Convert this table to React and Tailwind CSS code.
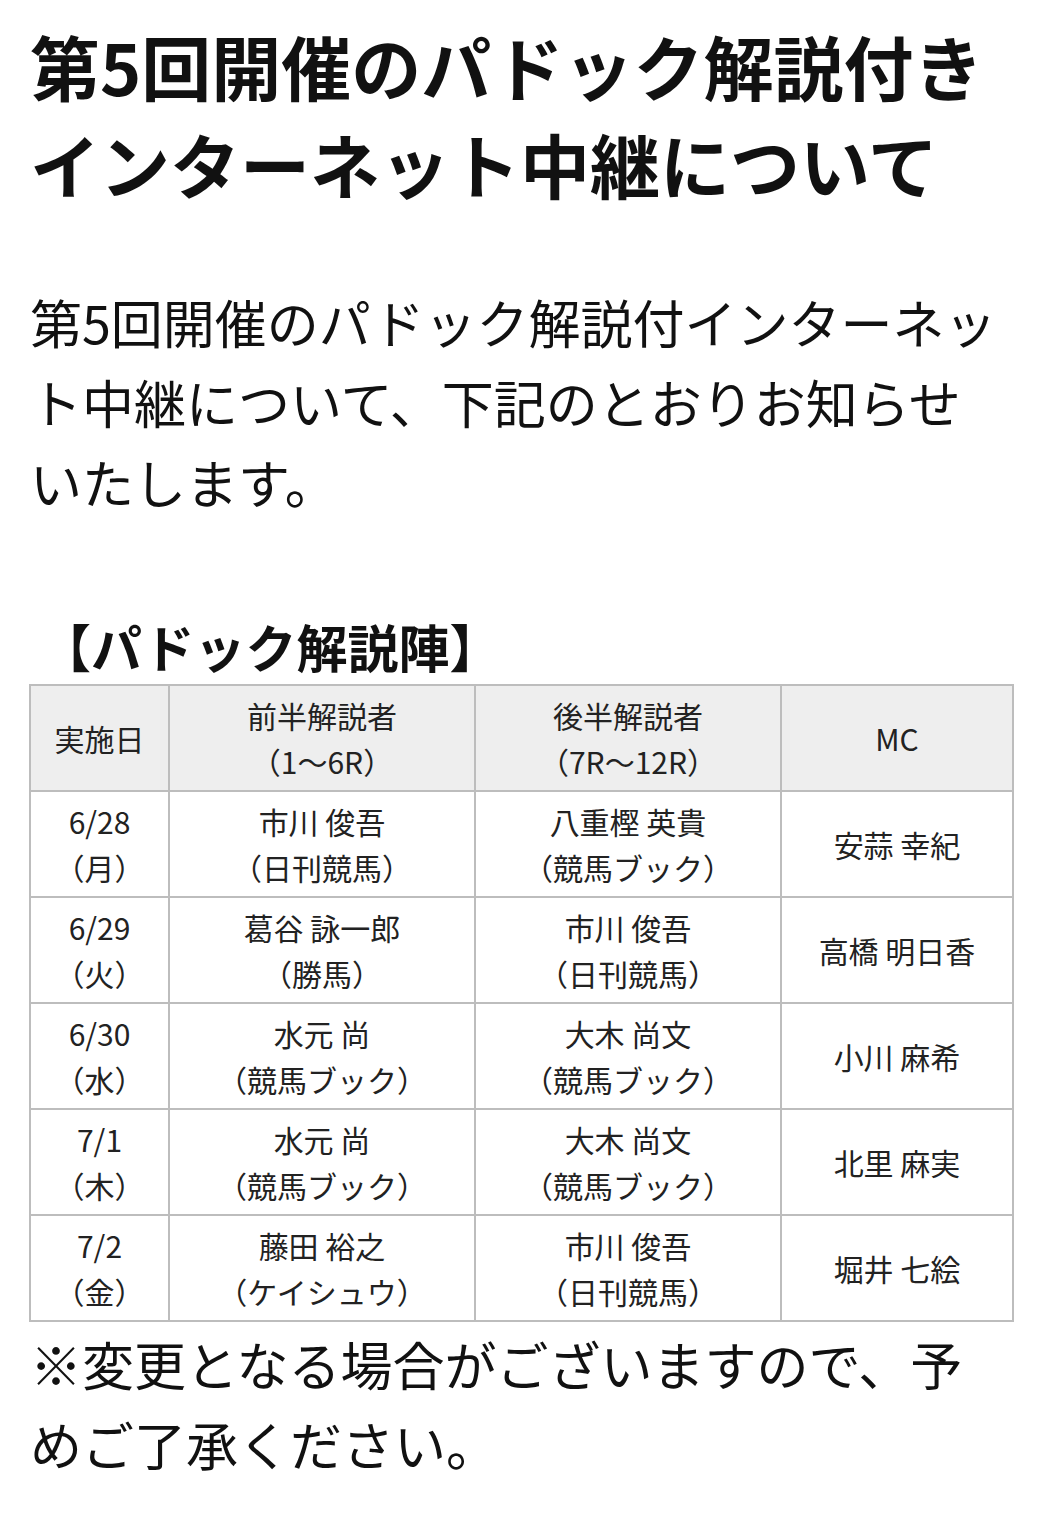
const rows = [
  { date: '6/28', day: '（月）', first: ['市川 俊吾', '（日刊競馬）'], second: ['八重樫 英貴', '（競馬ブック）'], mc: '安蒜 幸紀' },
  { date: '6/29', day: '（火）', first: ['葛谷 詠一郎', '（勝馬）'], second: ['市川 俊吾', '（日刊競馬）'], mc: '高橋 明日香' },
  { date: '6/30', day: '（水）', first: ['水元 尚', '（競馬ブック）'], second: ['大木 尚文', '（競馬ブック）'], mc: '小川 麻希' },
  { date: '7/1', day: '（木）', first: ['水元 尚', '（競馬ブック）'], second: ['大木 尚文', '（競馬ブック）'], mc: '北里 麻実' },
  { date: '7/2', day: '（金）', first: ['藤田 裕之', '（ケイシュウ）'], second: ['市川 俊吾', '（日刊競馬）'], mc: '堀井 七絵' },
]

const cell = 'border-2 border-[#bdbdbd] px-2 py-[6px] text-center align-middle text-[30px] leading-[46px]'

export default function App() {
  return (
    <div className="min-h-[1535px] bg-white px-[30px] pt-[17px] text-[#111] [font-family:'Noto_Sans_CJK_JP',sans-serif]">
      <h1 className="text-[70px] font-bold leading-[98px]">
        第5回開催のパドック解説付きインターネット中継について
      </h1>

      <p className="mt-[69px] text-[52px] leading-[80px]">
        第5回開催のパドック解説付インターネット中継について、下記のとおりお知らせいたします。
      </p>

      <h2 className="mt-[86px] pl-[10px] text-[51px] font-bold leading-[76px]">【パドック解説陣】</h2>

      <table className="w-[983px] -ml-px table-fixed border-collapse text-[#222]">
        <colgroup>
          <col className="w-[139px]" />
          <col className="w-[306px]" />
          <col className="w-[306px]" />
          <col className="w-[232px]" />
        </colgroup>
        <thead>
          <tr className="bg-[#eeeeee]">
            <th className={`${cell} font-normal`}>実施日</th>
            <th className={`${cell} font-normal`}>前半解説者<br />（1〜6R）</th>
            <th className={`${cell} font-normal`}>後半解説者<br />（7R〜12R）</th>
            <th className={`${cell} font-normal`}>MC</th>
          </tr>
        </thead>
        <tbody>
          {rows.map((r) => (
            <tr key={r.date}>
              <td className={cell}>{r.date}<br />{r.day}</td>
              <td className={cell}>{r.first[0]}<br />{r.first[1]}</td>
              <td className={cell}>{r.second[0]}<br />{r.second[1]}</td>
              <td className={cell}>{r.mc}</td>
            </tr>
          ))}
        </tbody>
      </table>

      <p className="mt-[2px] text-[52px] leading-[80px]">
        ※変更となる場合がございますので、予めご了承ください。
      </p>
    </div>
  )
}
